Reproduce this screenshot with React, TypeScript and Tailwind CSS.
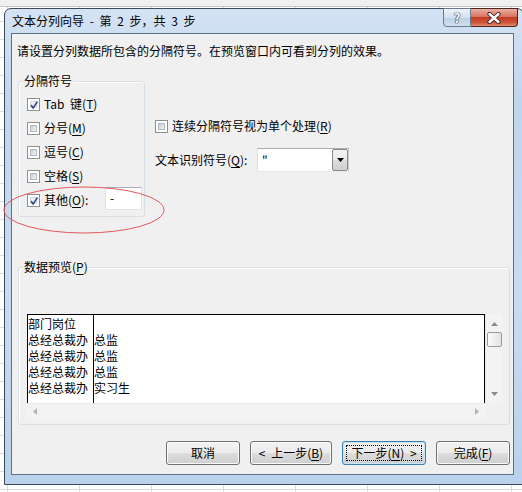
import React from "react";

const rows: [string, string][] = [
  ["部门岗位", ""],
  ["总经总裁办", "总监"],
  ["总经总裁办", "总监"],
  ["总经总裁办", "总监"],
  ["总经总裁办", "实习生"],
];

function K({ children }: { children: React.ReactNode }) {
  return <span className="underline underline-offset-[2px]">{children}</span>;
}

function Check({ checked }: { checked?: boolean }) {
  return (
    <span className="relative flex h-[13px] w-[13px] shrink-0 border border-[#8e8f8f] bg-white p-[2px]">
      <span
        className={
          checked
            ? "block h-full w-full border border-[#d4d8dd] bg-[linear-gradient(135deg,#e8ebee,#ffffff)]"
            : "block h-full w-full border border-[#b3b8be] bg-[linear-gradient(135deg,#c9cdd3,#f4f4f4)]"
        }
      />
      {checked && (
        <svg className="absolute left-[1px] top-[1px]" width="10" height="10" viewBox="0 0 10 10">
          <path d="M2 5 L4.2 8 L8.4 1.5" fill="none" stroke="#3a4f8a" strokeWidth="1.7" />
        </svg>
      )}
    </span>
  );
}

function Btn({ children, w, def }: { children: React.ReactNode; w: string; def?: boolean }) {
  return (
    <div
      className={`relative flex h-[24px] ${w} items-center justify-center rounded-[3px] border [word-spacing:3px] ${
        def ? "border-[#3c7fb1] shadow-[inset_0_0_0_1px_#c5e6f8]" : "border-[#707070] shadow-[inset_0_0_0_1px_#fbfbfb]"
      } bg-[linear-gradient(to_bottom,#f2f2f2_0%,#ebebeb_50%,#dddddd_50%,#cfcfcf_100%)]`}
    >
      {children}
      {def && <span className="absolute inset-[3px] border border-dotted border-black" />}
    </div>
  );
}

function Dialog() {
  return (
    <div className="absolute left-[4px] top-[8px] flex h-[477px] w-[520px] flex-col rounded-t-[7px] border border-[#3f4a58] bg-[linear-gradient(to_bottom,#d4e3f4,#bfd5ee_20%,#c9dbf0_60%,#b9d1ec)]">
      <div className="flex h-[24px] shrink-0 items-center pl-[7px] [word-spacing:3px]">文本分列向导 - 第 2 步，共 3 步</div>

      {/* caption buttons */}
      <div className="absolute right-[5px] top-[-1px] flex h-[19px]">
        <div className="flex w-[28px] items-center justify-center rounded-bl-[4px] border border-[#6b7a8e] bg-[linear-gradient(to_bottom,#eef3fa,#d3e0ef_50%,#bccfe4_50%,#d2dfee)]">
          <span className="text-[13px] font-bold leading-none text-white [text-shadow:0_0_1px_#1f2a3a,0_0_1px_#1f2a3a,0_0_1px_#1f2a3a]">?</span>
        </div>
        <div className="flex w-[47px] items-center justify-center rounded-br-[4px] border border-l-0 border-[#4b2420] bg-[linear-gradient(to_bottom,#eab0a3_0%,#d9735f_45%,#c23b22_50%,#cc5438_80%,#e39175_100%)]">
          <svg width="16" height="12" viewBox="0 0 16 12">
            <path d="M3.5 2 L12.5 10 M12.5 2 L3.5 10" stroke="#3b1f1c" strokeWidth="4.2" strokeLinecap="round" />
            <path d="M3.5 2 L12.5 10 M12.5 2 L3.5 10" stroke="#ffffff" strokeWidth="2.4" strokeLinecap="round" />
          </svg>
        </div>
      </div>

      {/* client area */}
      <div className="ml-[6px] flex h-[442px] w-[503px] flex-col border border-[#5f7186] bg-[#f0f0f0]">
        <p className="ml-[5px] mt-[9px]">请设置分列数据所包含的分隔符号。在预览窗口内可看到分列的效果。</p>

        <div className="mt-[22px] flex">
          <div className="relative ml-[6px] h-[136px] w-[127px] rounded-[3px] border border-[#d5dfe5] pl-[8px] pt-[10px] shadow-[inset_1px_1px_0_#ffffff]">
            <span className="absolute left-[4px] top-[-9px] bg-[#f0f0f0] px-[1px]">分隔符号</span>
            <div className="flex h-[24px] items-center gap-[4px]">
              <Check checked />
              <span className="[word-spacing:3px]">
                Tab 键(<K>T</K>)
              </span>
            </div>
            <div className="flex h-[24px] items-center gap-[4px]">
              <Check />
              <span>
                分号(<K>M</K>)
              </span>
            </div>
            <div className="flex h-[24px] items-center gap-[4px]">
              <Check />
              <span>
                逗号(<K>C</K>)
              </span>
            </div>
            <div className="flex h-[24px] items-center gap-[4px]">
              <Check />
              <span>
                空格(<K>S</K>)
              </span>
            </div>
            <div className="flex h-[24px] items-center gap-[4px]">
              <Check checked />
              <span className="w-[57px]">
                其他(<K>O</K>):
              </span>
              <div className="mb-[3px] h-[23px] w-[37px] border border-[#e2e3ea] border-t-[#abadb3] border-l-[#dbdfe6] bg-white pl-[4px] leading-[20px]">
                -
              </div>
            </div>
          </div>

          <div className="ml-[10px] pt-[37px]">
            <div className="flex h-[16px] items-center gap-[4px]">
              <Check />
              <span>
                连续分隔符号视为单个处理(<K>R</K>)
              </span>
            </div>
            <div className="mt-[14px] flex items-center">
              <span className="w-[102px]">
                文本识别符号(<K>Q</K>):
              </span>
              <div className="flex h-[24px] w-[92px] border border-[#abadb3] border-b-[#e3e9ef] border-l-[#dbdfe6] border-r-[#c7cbd2] bg-white">
                <span className="flex-1 pl-[4px] leading-[22px]">"</span>
                <span className="flex w-[16px] items-center justify-center rounded-[2px] border border-[#8a8a8a] bg-[linear-gradient(to_bottom,#f2f2f2_0%,#ebebeb_50%,#dddddd_50%,#cfcfcf_100%)]">
                  <svg width="7" height="4" viewBox="0 0 7 4">
                    <path d="M0 0 H7 L3.5 4 Z" fill="#000" />
                  </svg>
                </span>
              </div>
            </div>
          </div>
        </div>

        {/* preview group */}
        <div className="relative ml-[6px] mt-[50px] h-[158px] w-[492px] rounded-[3px] border border-[#d5dfe5] pl-[8px] pt-[46px] shadow-[inset_1px_1px_0_#ffffff]">
          <span className="absolute left-[4px] top-[-9px] bg-[#f0f0f0] px-[1px]">
            数据预览(<K>P</K>)
          </span>
          <div className="flex w-[475px]">
            <div className="flex w-[458px] flex-col">
              <div className="flex h-[89px] border border-b-0 border-black bg-white">
                <div className="w-[66px] border-r border-black pt-[1px]">
                  {rows.map((r, i) => (
                    <div key={i} className="h-[16px] whitespace-nowrap">
                      {r[0]}
                    </div>
                  ))}
                </div>
                <div className="flex-1 pt-[1px]">
                  {rows.map((r, i) => (
                    <div key={i} className="h-[16px] whitespace-nowrap">
                      {r[1]}
                    </div>
                  ))}
                </div>
              </div>
              <div className="flex h-[16px] items-center justify-between border-t border-[#e8e8e8] bg-[#f3f3f3] px-[6px]">
                <svg width="4" height="7" viewBox="0 0 4 7">
                  <path d="M4 0 V7 L0 3.5 Z" fill="#b4b4b4" />
                </svg>
                <svg width="4" height="7" viewBox="0 0 4 7">
                  <path d="M0 0 V7 L4 3.5 Z" fill="#b4b4b4" />
                </svg>
              </div>
            </div>
            <div className="flex w-[17px] flex-col">
              <div className="flex h-[89px] flex-col items-center border-l border-[#e6e6e6] bg-[#f3f3f3] pt-[8px]">
                <svg width="7" height="4" viewBox="0 0 7 4">
                  <path d="M0 4 H7 L3.5 0 Z" fill="#8a8a8a" />
                </svg>
                <div className="mt-[6px] h-[15px] w-[15px] rounded-[2px] border border-[#9b9b9b] bg-[linear-gradient(to_right,#fbfbfb,#e3e3e3)]" />
                <div className="flex-1" />
                <svg className="mb-[7px]" width="7" height="4" viewBox="0 0 7 4">
                  <path d="M0 0 H7 L3.5 4 Z" fill="#8a8a8a" />
                </svg>
              </div>
              <div className="h-[16px] bg-[#f0f0f0]" />
            </div>
          </div>
        </div>

        {/* buttons */}
        <div className="mt-[16px] flex justify-end gap-[10px] pr-[3px]">
          <Btn w="w-[74px]">取消</Btn>
          <Btn w="w-[82px]">
            &lt; 上一步(<K>B</K>)
          </Btn>
          <Btn w="w-[84px]" def>
            下一步(<K>N</K>) &gt;
          </Btn>
          <Btn w="w-[74px]">
            完成(<K>F</K>)
          </Btn>
        </div>
      </div>
    </div>
  );
}

export default function App() {
  return (
    <div className="relative h-[492px] w-[522px] overflow-hidden bg-white bg-[linear-gradient(to_right,#d9d9d9_1px,transparent_1px),linear-gradient(to_bottom,#d9d9d9_1px,transparent_1px)] bg-size-[72px_18px] bg-position-[7px_3px] font-['Noto_Sans_CJK_SC',sans-serif] text-[12px] leading-[16px] text-black">
      <div className="h-[7px] border-b border-[#c6c6c6] bg-[#f0f0f0]" />
      <Dialog />
      <svg className="pointer-events-none absolute left-0 top-0" width="522" height="492">
        <ellipse cx="84" cy="210" rx="80" ry="23" fill="none" stroke="#e2585c" strokeWidth="1" />
      </svg>
    </div>
  );
}
